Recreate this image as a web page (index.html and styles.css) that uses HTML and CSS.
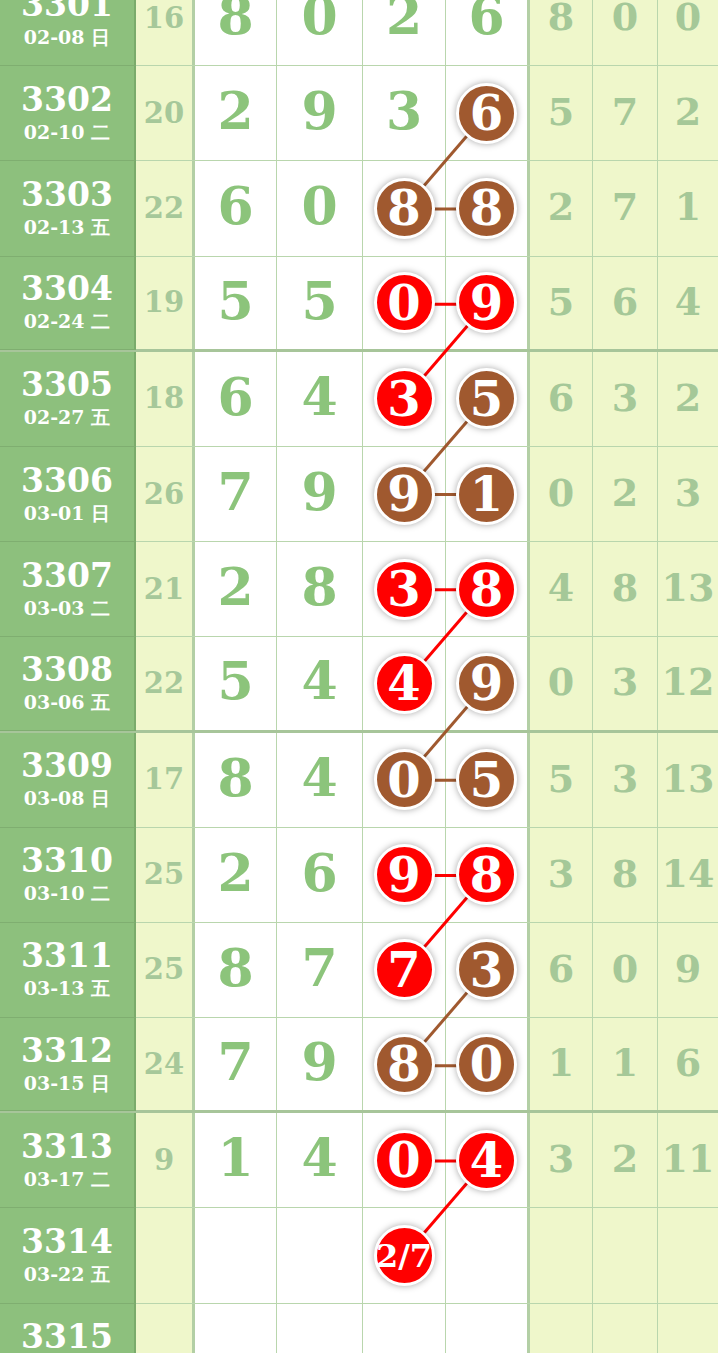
FILE: index.html
```html
<!DOCTYPE html>
<html lang="zh">
<head>
<meta charset="utf-8">
<title>走势图</title>
<link rel="stylesheet" href="styles.css">
</head>
<body>
<div class="chart">
  <svg class="links" width="718" height="1428" viewBox="0 0 718 1428">
    <g stroke-width="3" stroke-linecap="butt">
      <line x1="486" y1="142.8" x2="404" y2="238" stroke="#a0592f"/>
      <line x1="404" y1="238" x2="486" y2="238" stroke="#a0592f"/>
      <line x1="486" y1="428.4" x2="404" y2="523.6" stroke="#a0592f"/>
      <line x1="404" y1="523.6" x2="486" y2="523.6" stroke="#a0592f"/>
      <line x1="486" y1="714" x2="404" y2="809.2" stroke="#a0592f"/>
      <line x1="404" y1="809.2" x2="486" y2="809.2" stroke="#a0592f"/>
      <line x1="486" y1="999.6" x2="404" y2="1094.8" stroke="#a0592f"/>
      <line x1="404" y1="1094.8" x2="486" y2="1094.8" stroke="#a0592f"/>
      <line x1="404" y1="333.2" x2="486" y2="333.2" stroke="#f00"/>
      <line x1="486" y1="333.2" x2="404" y2="428.4" stroke="#f00"/>
      <line x1="404" y1="618.8" x2="486" y2="618.8" stroke="#f00"/>
      <line x1="486" y1="618.8" x2="404" y2="714" stroke="#f00"/>
      <line x1="404" y1="904.4" x2="486" y2="904.4" stroke="#f00"/>
      <line x1="486" y1="904.4" x2="404" y2="999.6" stroke="#f00"/>
      <line x1="404" y1="1190" x2="486" y2="1190" stroke="#f00"/>
      <line x1="486" y1="1190" x2="404" y2="1285.2" stroke="#f00"/>
    </g>
  </svg>

  <div class="row">
    <div class="c issue"><span class="no">3301</span><span class="date">02-08 日</span></div>
    <div class="c sum">16</div>
    <div class="c w">8</div><div class="c w">0</div><div class="c w">2</div><div class="c w edge">6</div>
    <div class="c r">8</div><div class="c r">0</div><div class="c r last">0</div>
  </div>
  <div class="row">
    <div class="c issue"><span class="no">3302</span><span class="date">02-10 二</span></div>
    <div class="c sum">20</div>
    <div class="c w">2</div><div class="c w">9</div><div class="c w">3</div><div class="c w edge"><span class="ball brown">6</span></div>
    <div class="c r">5</div><div class="c r">7</div><div class="c r last">2</div>
  </div>
  <div class="row">
    <div class="c issue"><span class="no">3303</span><span class="date">02-13 五</span></div>
    <div class="c sum">22</div>
    <div class="c w">6</div><div class="c w">0</div><div class="c w"><span class="ball brown">8</span></div><div class="c w edge"><span class="ball brown">8</span></div>
    <div class="c r">2</div><div class="c r">7</div><div class="c r last">1</div>
  </div>
  <div class="row group-end">
    <div class="c issue"><span class="no">3304</span><span class="date">02-24 二</span></div>
    <div class="c sum">19</div>
    <div class="c w">5</div><div class="c w">5</div><div class="c w"><span class="ball red">0</span></div><div class="c w edge"><span class="ball red">9</span></div>
    <div class="c r">5</div><div class="c r">6</div><div class="c r last">4</div>
  </div>
  <div class="row">
    <div class="c issue"><span class="no">3305</span><span class="date">02-27 五</span></div>
    <div class="c sum">18</div>
    <div class="c w">6</div><div class="c w">4</div><div class="c w"><span class="ball red">3</span></div><div class="c w edge"><span class="ball brown">5</span></div>
    <div class="c r">6</div><div class="c r">3</div><div class="c r last">2</div>
  </div>
  <div class="row">
    <div class="c issue"><span class="no">3306</span><span class="date">03-01 日</span></div>
    <div class="c sum">26</div>
    <div class="c w">7</div><div class="c w">9</div><div class="c w"><span class="ball brown">9</span></div><div class="c w edge"><span class="ball brown">1</span></div>
    <div class="c r">0</div><div class="c r">2</div><div class="c r last">3</div>
  </div>
  <div class="row">
    <div class="c issue"><span class="no">3307</span><span class="date">03-03 二</span></div>
    <div class="c sum">21</div>
    <div class="c w">2</div><div class="c w">8</div><div class="c w"><span class="ball red">3</span></div><div class="c w edge"><span class="ball red">8</span></div>
    <div class="c r">4</div><div class="c r">8</div><div class="c r last">13</div>
  </div>
  <div class="row group-end">
    <div class="c issue"><span class="no">3308</span><span class="date">03-06 五</span></div>
    <div class="c sum">22</div>
    <div class="c w">5</div><div class="c w">4</div><div class="c w"><span class="ball red">4</span></div><div class="c w edge"><span class="ball brown">9</span></div>
    <div class="c r">0</div><div class="c r">3</div><div class="c r last">12</div>
  </div>
  <div class="row">
    <div class="c issue"><span class="no">3309</span><span class="date">03-08 日</span></div>
    <div class="c sum">17</div>
    <div class="c w">8</div><div class="c w">4</div><div class="c w"><span class="ball brown">0</span></div><div class="c w edge"><span class="ball brown">5</span></div>
    <div class="c r">5</div><div class="c r">3</div><div class="c r last">13</div>
  </div>
  <div class="row">
    <div class="c issue"><span class="no">3310</span><span class="date">03-10 二</span></div>
    <div class="c sum">25</div>
    <div class="c w">2</div><div class="c w">6</div><div class="c w"><span class="ball red">9</span></div><div class="c w edge"><span class="ball red">8</span></div>
    <div class="c r">3</div><div class="c r">8</div><div class="c r last">14</div>
  </div>
  <div class="row">
    <div class="c issue"><span class="no">3311</span><span class="date">03-13 五</span></div>
    <div class="c sum">25</div>
    <div class="c w">8</div><div class="c w">7</div><div class="c w"><span class="ball red">7</span></div><div class="c w edge"><span class="ball brown">3</span></div>
    <div class="c r">6</div><div class="c r">0</div><div class="c r last">9</div>
  </div>
  <div class="row group-end">
    <div class="c issue"><span class="no">3312</span><span class="date">03-15 日</span></div>
    <div class="c sum">24</div>
    <div class="c w">7</div><div class="c w">9</div><div class="c w"><span class="ball brown">8</span></div><div class="c w edge"><span class="ball brown">0</span></div>
    <div class="c r">1</div><div class="c r">1</div><div class="c r last">6</div>
  </div>
  <div class="row">
    <div class="c issue"><span class="no">3313</span><span class="date">03-17 二</span></div>
    <div class="c sum">9</div>
    <div class="c w">1</div><div class="c w">4</div><div class="c w"><span class="ball red">0</span></div><div class="c w edge"><span class="ball red">4</span></div>
    <div class="c r">3</div><div class="c r">2</div><div class="c r last">11</div>
  </div>
  <div class="row">
    <div class="c issue"><span class="no">3314</span><span class="date">03-22 五</span></div>
    <div class="c sum"></div>
    <div class="c w"></div><div class="c w"></div><div class="c w"><span class="ball red small">2/7</span></div><div class="c w edge"></div>
    <div class="c r"></div><div class="c r"></div><div class="c r last"></div>
  </div>
  <div class="row">
    <div class="c issue"><span class="no">3315</span><span class="date">03-24 日</span></div>
    <div class="c sum"></div>
    <div class="c w"></div><div class="c w"></div><div class="c w"></div><div class="c w edge"></div>
    <div class="c r"></div><div class="c r"></div><div class="c r last"></div>
  </div>
</div>
</body>
</html>
```

FILE: styles.css
```css
html, body {
  margin: 0;
  padding: 0;
  background: #ffffff;
}

body {
  width: 718px;
  height: 1353px;
  overflow: hidden;
  font-family: "DejaVu Serif", "Liberation Serif", serif;
  font-weight: bold;
}

.chart {
  position: relative;
  width: 718px;
  margin-top: -29px;
}

.links {
  position: absolute;
  left: 0;
  top: 0;
  z-index: 1;
  pointer-events: none;
}

.row {
  display: grid;
  grid-template-columns: 136px 59px 82px 86px 83px 84px 63px 65px 60px;
  height: 95.2px;
  box-sizing: border-box;
  border-bottom: 1px solid #b9d6ad;
}

.row.group-end {
  border-bottom: 3px solid #a7c59a;
}

.c {
  display: flex;
  align-items: center;
  justify-content: center;
  box-sizing: border-box;
  border-right: 1px solid #b9d6ad;
  line-height: 1;
}

.issue {
  flex-direction: column;
  background: #8dc07d;
  color: #ffffff;
  border-right: 2px solid #7aab6b;
  border-bottom: 1px solid #7fae70;
  margin-bottom: -1px;
  gap: 7px;
  padding-bottom: 2px;
}

.issue .no {
  font-size: 33px;
}

.issue .date {
  font-size: 19px;
}

.sum {
  background: #eff7cb;
  color: #a6c89a;
  font-size: 29px;
  border-right: 3px solid #b3cfa5;
}

.w {
  background: #ffffff;
  color: #8cc47b;
  font-size: 52px;
  padding-bottom: 4px;
}

.w.edge {
  border-right: 3px solid #b3cfa5;
}

.r {
  background: #eff7cb;
  color: #a5c898;
  font-size: 38px;
  padding-bottom: 2px;
}

.r.last {
  border-right: none;
}

.ball {
  position: relative;
  z-index: 2;
  display: flex;
  align-items: center;
  justify-content: center;
  width: 55px;
  height: 55px;
  border-radius: 50%;
  border: 3px solid #ffffff;
  box-shadow: 0 0 7px rgba(0, 0, 0, 0.35);
  color: #ffffff;
  font-size: 48px;
  margin-top: 4px;
}

.ball.brown {
  background: #a0592f;
}

.ball.red {
  background: #ff0000;
}

.ball.small {
  font-size: 32px;
}
```
